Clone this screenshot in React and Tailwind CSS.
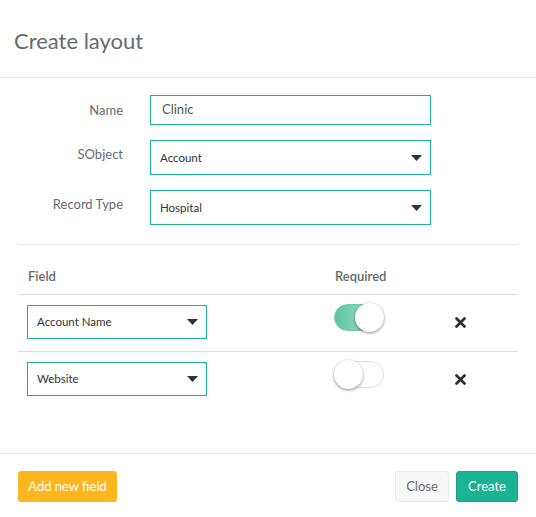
import React, { useState } from "react";

function Caret() {
  return (
    <svg width="11" height="6" viewBox="0 0 11 6" className="shrink-0">
      <path d="M0 0 L11 0 L5.5 6 Z" fill="#333333" />
    </svg>
  );
}

function SelectBox({ value, className }) {
  return (
    <div
      className={`flex items-center justify-between border border-[#1ab394] bg-white pl-[9px] pr-[8px] text-[11.5px] text-[#333333] ${className}`}
    >
      <span>{value}</span>
      <Caret />
    </div>
  );
}

function Toggle({ on }) {
  return (
    <div
      className={`relative h-[27px] w-[50px] rounded-full border ${
        on
          ? "border-[#6ccaab] bg-gradient-to-r from-[#5ec5a4] to-[#a9e0cc]"
          : "border-[#dfdfdf] bg-white"
      }`}
    >
      <div
        className={`absolute top-[-2px] h-[29px] w-[29px] rounded-full bg-white shadow-[0_1px_3px_rgba(0,0,0,0.45)] ${
          on ? "right-[-1px]" : "left-[-1px]"
        }`}
      />
    </div>
  );
}

function Times() {
  return (
    <svg width="11" height="11" viewBox="0 0 11 11">
      <path d="M1.5 1.5 L9.5 9.5 M9.5 1.5 L1.5 9.5" stroke="#2f2f2f" strokeWidth="2.7" strokeLinecap="round" />
    </svg>
  );
}

export default function App() {
  const [campos] = useState([
    { nombre: "Account Name", requerido: true },
    { nombre: "Website", requerido: false },
  ]);

  return (
    <div className="flex h-[517px] w-[536px] flex-col bg-white font-['Lato','Open_Sans',sans-serif] text-[13px] text-[#676a6c]">
      {/* header */}
      <div className="h-[78px] border-b border-[#e5e5e5] px-[14px] pt-[28px]">
        <h2 className="text-[22px] leading-[25px] text-[#676a6c]">Create layout</h2>
      </div>

      {/* body */}
      <div className="flex-1 pt-[17px]">
        <div className="flex flex-col gap-[15px]">
          <div className="flex gap-[27px]">
            <label className="w-[123px] pt-[5px] text-right leading-[20px]">Name</label>
            <div className="flex h-[30px] w-[281px] items-center border border-[#1ab394] px-[11px] text-[13px] text-[#555555]">
              Clinic
            </div>
          </div>
          <div className="flex gap-[27px]">
            <label className="w-[123px] pt-[4px] text-right leading-[20px]">SObject</label>
            <SelectBox value="Account" className="h-[35px] w-[281px]" />
          </div>
          <div className="flex gap-[27px]">
            <label className="w-[123px] pt-[4px] text-right leading-[20px]">Record Type</label>
            <SelectBox value="Hospital" className="h-[35px] w-[281px]" />
          </div>
        </div>

        <div className="mx-[18px] mt-[19px] border-t border-[#ebebeb]" />

        {/* table */}
        <div className="mx-[18px]">
          <div className="flex border-b border-[#dddddd] pt-[21px] pb-[8px] font-semibold leading-[20px]">
            <div className="w-[317px] pl-[10px]">Field</div>
            <div>Required</div>
          </div>
          {campos.map((campo, index) => (
            <div
              key={index}
              className={`flex items-start pt-[10px] pb-[12px] ${
                index < campos.length - 1 ? "border-b border-[#dddddd]" : ""
              }`}
            >
              <div className="w-[316px] pl-[9px]">
                <SelectBox value={campo.nombre} className="h-[34px] w-[180px]" />
              </div>
              <div className="-mt-[1px] w-[121px]">
                <Toggle on={campo.requerido} />
              </div>
              <div className="flex h-[34px] items-center">
                <Times />
              </div>
            </div>
          ))}
        </div>
      </div>

      {/* footer */}
      <div className="flex h-[64px] items-start justify-between border-t border-[#e5e5e5] px-[18px] pt-[17px]">
        <button className="h-[31px] w-[99px] rounded-[3px] bg-[#ffb61e] text-[13px] text-white">
          Add new field
        </button>
        <div className="flex gap-[7px]">
          <button className="h-[31px] w-[54px] rounded-[3px] border border-[#e7eaec] bg-[#f8f8f8] text-[13px] text-[#676a6c]">
            Close
          </button>
          <button className="h-[31px] w-[62px] rounded-[3px] border border-[#1aa385] bg-[#1ab394] text-[13px] text-white">
            Create
          </button>
        </div>
      </div>
    </div>
  );
}
